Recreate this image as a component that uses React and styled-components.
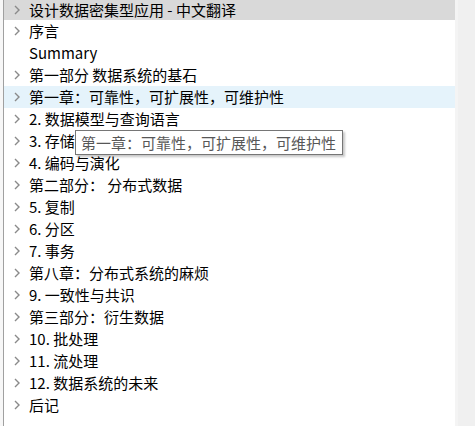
import styled, { createGlobalStyle } from "styled-components";

const GlobalStyle = createGlobalStyle`
  html, body {
    margin: 0;
    padding: 0;
    background: #ffffff;
  }
  body {
    font-family: "Noto Sans CJK SC", "Noto Sans", sans-serif;
  }
`;

const Window = styled.div`
  position: relative;
  display: flex;
  width: 475px;
  height: 426px;
  overflow: hidden;
  background: #ffffff;
`;

const LeftEdge = styled.div`
  width: 3px;
  border-right: 1px solid #a0a0a0;
  background: #f7f7f7;
`;

const Tree = styled.div`
  flex: 1;
  display: flex;
  flex-direction: column;
`;

const Row = styled.div`
  display: flex;
  align-items: center;
  height: ${(p) => (p.$head ? "20px" : "22px")};
  background: ${(p) => (p.$head ? "#d9d9d9" : p.$hover ? "#e5f3fb" : "transparent")};
  font-size: 15px;
  line-height: 22px;
  color: #000000;
  white-space: nowrap;
`;

const Toggle = styled.span`
  width: 25px;
  flex: none;
  display: flex;
  justify-content: center;
  align-items: center;
`;

const Label = styled.span`
  display: block;
`;

const Scrollbar = styled.div`
  width: 17px;
  border-left: 3px solid #f4f4f4;
  background: #f0f0f0;
`;

const Tooltip = styled.div`
  position: absolute;
  left: 75px;
  top: 130px;
  width: 266px;
  height: 23px;
  border: 1px solid #767676;
  background: #ffffff;
  box-shadow: 2px 2px 2px rgba(0, 0, 0, 0.22);
  color: #575757;
  font-size: 15px;
  line-height: 23px;
  padding-left: 5px;
  box-sizing: border-box;
  width: 268px;
  height: 25px;
  white-space: nowrap;
`;

const Chevron = () => (
  <svg width="6" height="10" viewBox="0 0 6 10">
    <polyline points="1,1 5,5 1,9" fill="none" stroke="#8a8a8a" strokeWidth="1.4" />
  </svg>
);

const items = [
  { text: "设计数据密集型应用 - 中文翻译", head: true },
  { text: "序言" },
  { text: "Summary", leaf: true },
  { text: "第一部分 数据系统的基石" },
  { text: "第一章：可靠性，可扩展性，可维护性", hover: true },
  { text: "2. 数据模型与查询语言" },
  { text: "3. 存储与检索" },
  { text: "4. 编码与演化" },
  { text: "第二部分： 分布式数据" },
  { text: "5. 复制" },
  { text: "6. 分区" },
  { text: "7. 事务" },
  { text: "第八章：分布式系统的麻烦" },
  { text: "9. 一致性与共识" },
  { text: "第三部分：衍生数据" },
  { text: "10. 批处理" },
  { text: "11. 流处理" },
  { text: "12. 数据系统的未来" },
  { text: "后记" },
];

export default function App() {
  return (
    <>
      <GlobalStyle />
      <Window>
        <LeftEdge />
        <Tree>
          {items.map((it) => (
            <Row key={it.text} $head={it.head} $hover={it.hover}>
              <Toggle>{!it.leaf && <Chevron />}</Toggle>
              <Label>{it.text}</Label>
            </Row>
          ))}
        </Tree>
        <Scrollbar />
        <Tooltip>第一章：可靠性，可扩展性，可维护性</Tooltip>
      </Window>
    </>
  );
}
